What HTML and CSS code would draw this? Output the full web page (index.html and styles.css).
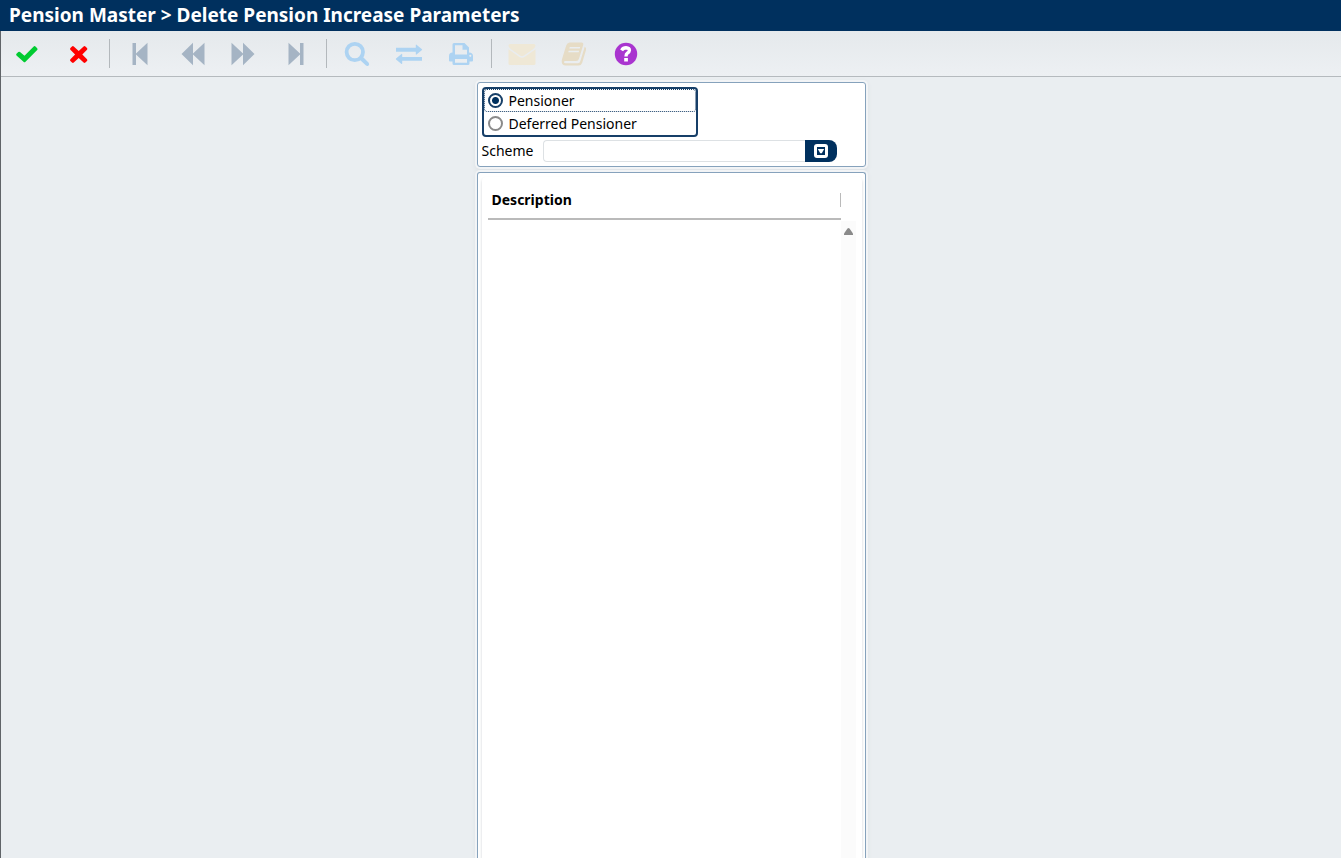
FILE: index.html
```html
<!DOCTYPE html>
<html lang="en">
<head>
<meta charset="utf-8">
<title>Delete Pension Increase Parameters</title>
<link rel="stylesheet" href="styles.css">
</head>
<body>
<header class="titlebar"><h1 class="title">Pension Master &gt; Delete Pension Increase Parameters</h1></header>
<div class="workspace">
  <nav class="toolbar" aria-label="Actions">
    <button class="tool green" type="button" aria-label="Accept"><svg width="24" height="24" viewBox="0 0 24 24"><path d="M1.500 11.800 3.300 10Q4.200 9.300 5 10L9.500 13.700 18.700 4.500Q19.600 3.700 20.500 4.500L22.200 6.200Q23 7.100 22.200 8L10.500 19.700Q9.500 20.700 8.500 19.700L1.500 13.500Q.7 12.600 1.500 11.800Z"/></svg></button>
    <button class="tool red" type="button" aria-label="Cancel"><svg width="24" height="24" viewBox="0 0 24 24"><path d="M5 4.400Q5.900 3.600 6.800 4.400L11.700 9 16.600 4.400Q17.500 3.600 18.400 4.400L20 6Q20.800 6.900 20 7.800L15.300 12.500 20 17.200Q20.800 18.100 20 19L18.400 20.600Q17.500 21.400 16.600 20.600L11.700 16 6.800 20.600Q5.900 21.400 5 20.600L3.400 19Q2.600 18.100 3.400 17.200L8.100 12.500 3.400 7.800Q2.600 6.900 3.400 6Z"/></svg></button>
    <span class="divider"></span>
    <button class="tool slate" type="button" aria-label="First"><svg width="24" height="24" viewBox="0 0 24 24"><path d="M4.500 1H8V11.500L19.500 .8V23.200L8 12.500V23H4.500Z"/></svg></button>
    <button class="tool slate" type="button" aria-label="Previous"><svg width="24" height="24" viewBox="0 0 24 24"><path d="M1.500 12 13 .8V11.500L24.500 .8V23.200L13 12.500V23.200Z"/></svg></button>
    <button class="tool slate" type="button" aria-label="Next"><svg width="24" height="24" viewBox="0 0 24 24"><path d="M-.5 .8 11 11.500V.8L22.500 12 11 23.200V12.500L-.5 23.200Z"/></svg></button>
    <button class="tool slate" type="button" aria-label="Last"><svg width="24" height="24" viewBox="0 0 24 24"><path d="M4.500 .8 16 11.500V1H19.500V23H16V12.500L4.500 23.200Z"/></svg></button>
    <span class="divider"></span>
    <button class="tool sky" type="button" aria-label="Search"><svg width="26" height="26" viewBox="0 0 26 26"><circle cx="10.800" cy="11" r="8.200" fill="none" stroke="currentColor" stroke-width="3.800"/><path d="M15.500 18.500 18.500 15.500 24.700 21.800Q25.700 23.400 24.600 24.400 23.500 25.500 22 24.600Z"/></svg></button>
    <button class="tool sky" type="button" aria-label="Exchange"><svg width="28" height="24" viewBox="0 0 28 24"><path d="M1 5.800H20.800V3Q20.800 2.300 21.500 2.700L27 7.300Q27.300 7.700 27 8.100L21.500 12.500Q20.800 12.900 20.800 12.200V9.700H1ZM27 15H7.200V12.300Q7.200 11.600 6.500 12L1 16.600Q.7 17 1 17.400L6.500 21.900Q7.200 22.300 7.200 21.600V18.800H27Z"/></svg></button>
    <button class="tool sky" type="button" aria-label="Print"><svg width="26" height="24" viewBox="0 0 26 24"><path fill-rule="evenodd" d="M4.500 10.500V2.500Q4.500 1 6 1H16.500L21 5.500V10.500Q25 10.500 25 14V18.500Q25 19.500 24 19.500H21.500V21.500Q21.500 23 20 23H6Q4.500 23 4.500 21.500V19.500H2Q1 19.500 1 18.500V14Q1 10.500 4.500 10.500ZM7 3.200V12.500H19V7.800H14.500V3.200ZM7 17V20.800H19V17ZM22.300 12.700A1.100 1.100 0 1 0 22.300 14.900 1.100 1.100 0 1 0 22.300 12.700Z"/></svg></button>
    <span class="divider"></span>
    <button class="tool cream" type="button" aria-label="Mail"><svg width="28" height="24" viewBox="0 0 28 24"><path d="M.5 3.500Q.5 2 2 2H26Q27.500 2 27.500 3.500 27.400 5.600 25 7.300L16 13.500Q14 14.800 12 13.500L3 7.300Q.6 5.600 .5 3.500ZM.5 7.200 11.500 15Q14 16.600 16.500 15L27.500 7.200V21.500Q27.500 23 26 23H2Q.5 23 .5 21.500Z"/></svg></button>
    <button class="tool sand" type="button" aria-label="Notes"><svg width="26" height="24" viewBox="0 0 26 24"><path d="M8.500 .5H20.500Q22.800 .8 22.200 3L18 16.800Q17.300 19 15 19H4Q2.700 19.200 3 20.400 3.400 21.200 4.800 21.200H17Q18.700 21.200 19.300 19.300L23.700 4.800Q25.700 5.800 25 8L21.200 20.800Q20.300 23.500 17.700 23.500H4.500Q1 23.200 .7 20 .5 18.500 1.200 16.500L5.200 3.500Q6 .8 8.500 .5Z"/><path class="cutout" d="M8.800 5H19.200L18.800 6.500H8.300ZM7.700 8.700H18.100L17.700 10.200H7.200Z"/></svg></button>
    <button class="tool violet" type="button" aria-label="Help"><svg width="24" height="24" viewBox="0 0 24 24"><circle cx="12" cy="12" r="11.200"/><path fill="none" stroke="#fff" stroke-width="3.400" d="M7.600 8.300Q9.200 5.800 12 5.800 15.400 6 15.400 8.500 15.300 10 13.600 10.900 12 11.900 12 14.400"/><path fill="#fff" d="M10.200 16H13.900V19.500H10.200Z"/></svg></button>
  </nav>
  <main class="content">
    <form class="panel filter">
      <fieldset class="choices" aria-label="Member type">
        <label class="choice focused"><input class="radio" type="radio" name="member" checked>Pensioner</label>
        <label class="choice"><input class="radio" type="radio" name="member">Deferred Pensioner</label>
      </fieldset>
      <div class="scheme">
        <label class="scheme-label" for="scheme">Scheme</label>
        <input class="scheme-input" id="scheme" type="text">
        <button class="lookup" type="button" aria-label="Choose scheme"><svg width="14" height="14" viewBox="0 0 14 14"><rect width="14" height="14" rx="3" fill="#fff"/><path fill="#00305e" d="M3 3H11V11H3Z"/><path fill="#fff" d="M3.800 5H10.200L7.800 9.300H6.200Z"/></svg></button>
      </div>
    </form>
    <section class="panel results">
      <div class="grid">
        <table class="table">
          <thead><tr><th class="heading" scope="col"><span class="heading-text">Description</span></th></tr></thead>
          <tbody></tbody>
        </table>
        <div class="scroll"><svg width="9" height="7" viewBox="0 0 9 7"><path fill="#8a8a8a" d="M0 7V5.500L3.500 .5Q4.500-.3 5.500 .5L9 5.500V7Z"/></svg></div>
      </div>
    </section>
  </main>
</div>
</body>
</html>
```
FILE: styles.css
```css
* { box-sizing: border-box; }
body {
  margin: 0;
  min-height: 100vh;
  display: flex;
  flex-direction: column;
  background: #eaeef1;
  color: #000;
  font: 14px/20px "Noto Sans", sans-serif;
}
button, input { font: inherit; }
.titlebar { background: #00305e; color: #fff; padding: 2px 9px 3px; }
.title { margin: 0; font-size: 19px; line-height: 26px; font-weight: 700; }
.workspace {
  flex: 1;
  display: flex;
  flex-direction: column;
  border-left: 1px solid #606468;
}
.toolbar {
  display: flex;
  align-items: center;
  height: 46px;
  border-bottom: 1px solid #b5babe;
  background: linear-gradient(#e5e9ec, #edf0f3);
}
.tool {
  width: 52px;
  height: 44px;
  padding: 0;
  border: 0;
  background: none;
  display: flex;
  align-items: center;
  justify-content: center;
}
.tool svg { fill: currentColor; overflow: visible; }
.tool .cutout { fill: #eaeef1; }
.green { color: #00cb31; }
.red { color: #f00; }
.slate { color: #a5b4c4; }
.sky { color: #add3f2; }
.cream { color: #efe8d6; }
.sand { color: #e6dcc6; }
.violet { color: #a934cf; }
.divider { width: 1px; height: 29px; margin: 0 4px; background: #b3b8bc; }
.content {
  flex: 1;
  display: flex;
  flex-direction: column;
  align-items: center;
  gap: 5px;
  padding-top: 5px;
}
.panel {
  width: 100%;
  max-width: 389px;
  background: #fff;
  border: 1px solid #86a2bc;
  border-radius: 3px;
  box-shadow: 0 0 0 2px #f2f4f6, 0 2px 4px 2px #dce1e5;
}
.filter { padding: 4px; }
.choices {
  width: 216px;
  margin: 0;
  padding: 0;
  border: 2px solid #173f68;
  border-radius: 4px;
}
.choice {
  display: flex;
  align-items: center;
  gap: 6px;
  height: 23px;
  padding: 0 4px;
  line-height: 18px;
}
.focused { outline: 1px dotted #173f68; outline-offset: -1px; border-radius: 3px; }
.radio {
  appearance: none;
  width: 15px;
  height: 15px;
  margin: 0;
  border: 2px solid #8a8a8a;
  border-radius: 50%;
  background: #fff;
}
.radio:checked {
  border-color: #173f68;
  background: radial-gradient(circle, #00305e 0 3px, #fff 4px);
}
.scheme { display: flex; align-items: center; margin-top: 3px; }
.scheme-label { width: 61px; }
.scheme-input {
  width: 262px;
  height: 22px;
  border: 1px solid #dde1e4;
  border-right: 0;
  border-radius: 4px 0 0 4px;
  padding: 0 4px;
}
.lookup {
  width: 32px;
  height: 22px;
  padding: 0;
  border: 0;
  border-radius: 0 8px 8px 0;
  background: #00305e;
  display: flex;
  align-items: center;
  justify-content: center;
}
.results {
  flex: 1;
  display: flex;
  border-bottom: 0;
  border-bottom-left-radius: 0;
  border-bottom-right-radius: 0;
  padding: 4px 3px 0 4px;
}
.grid {
  flex: 1;
  display: flex;
  align-items: stretch;
  padding: 3px 6px 0;
  border-radius: 4px 4px 0 0;
  box-shadow: 0 2px 3px #ccd0d4;
}
.table { flex: 1; align-self: flex-start; border-collapse: collapse; }
.heading { padding: 13px 0 11px; text-align: left; border-bottom: 2px solid #bababa; }
.heading-text {
  display: block;
  height: 14px;
  line-height: 14px;
  padding-left: 4px;
  border-right: 1px solid #bababa;
}
.scroll {
  width: 15px;
  margin-top: 41px;
  padding-top: 7px;
  background: #fbfbfb;
  display: flex;
  justify-content: center;
}
```
